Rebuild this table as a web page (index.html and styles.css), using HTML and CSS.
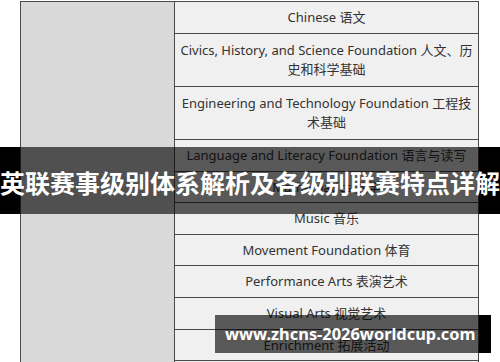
FILE: index.html
```html
<!DOCTYPE html>
<html lang="zh-CN">
<head>
<meta charset="utf-8">
<title>英联赛事级别体系解析</title>
<link rel="stylesheet" href="styles.css">
</head>
<body>
<div class="page">
  <table class="grid">
    <tr><td class="side" rowspan="11"></td><td>Chinese 语文</td></tr>
    <tr><td class="two">Civics, History, and Science Foundation 人文、历<br>史和科学基础</td></tr>
    <tr><td class="two">Engineering and Technology Foundation 工程技<br>术基础</td></tr>
    <tr><td>Language and Literacy Foundation 语言与读写</td></tr>
    <tr><td>Mathematics 数学</td></tr>
    <tr><td>Music 音乐</td></tr>
    <tr><td>Movement Foundation 体育</td></tr>
    <tr><td>Performance Arts 表演艺术</td></tr>
    <tr><td>Visual Arts 视觉艺术</td></tr>
    <tr><td>Enrichment 拓展活动</td></tr>
    <tr><td>&nbsp;</td></tr>
  </table>
  <div class="title-band"><h1 class="title">英联赛事级别体系解析及各级别联赛特点详解</h1></div>
  <div class="watermark">www.zhcns-2026worldcup.com</div>
</div>
</body>
</html>
```
FILE: styles.css
```css
html, body {
  margin: 0;
  height: 362px;
  overflow: hidden;
  background: #fff;
}
.page {
  position: relative;
  width: 500px;
  height: 362px;
  overflow: hidden;
}
.grid {
  margin: 1px 0 0 20px;
  width: 459px;
  border-collapse: collapse;
  font-family: "Noto Sans", "Noto Sans CJK SC", sans-serif;
  font-size: 13px;
  color: #333;
}
.grid td {
  border: 1px solid #4a4a4a;
  background: #f0f0f0;
  text-align: center;
  padding: 6px 4px;
  line-height: 18.6px;
  white-space: nowrap;
}
.grid td.two {
  padding-top: 7.5px;
  padding-bottom: 7.5px;
}
.grid td.side {
  background: #d9d9d9;
  width: 153px;
  padding: 0;
}
.title-band {
  position: absolute;
  left: 0;
  top: 147px;
  width: 500px;
  height: 67px;
  background: linear-gradient(to right, #000 20px, rgba(0,0,0,.63) 20px, rgba(0,0,0,.63) 479px, #000 479px);
}
.title {
  margin: 0;
  padding-top: 23px;
  font: 700 25px/25px "Noto Sans CJK SC", sans-serif;
  color: #fff;
  text-align: center;
  white-space: nowrap;
}
.watermark {
  position: absolute;
  left: 215px;
  top: 315px;
  width: 266px;
  height: 38px;
  padding-left: 10px;
  background: linear-gradient(to right, rgba(0,0,0,.63) 264px, #000 264px);
  font: 700 16.4px/38px "Noto Sans", sans-serif;
  color: #fff;
  white-space: nowrap;
}
```
